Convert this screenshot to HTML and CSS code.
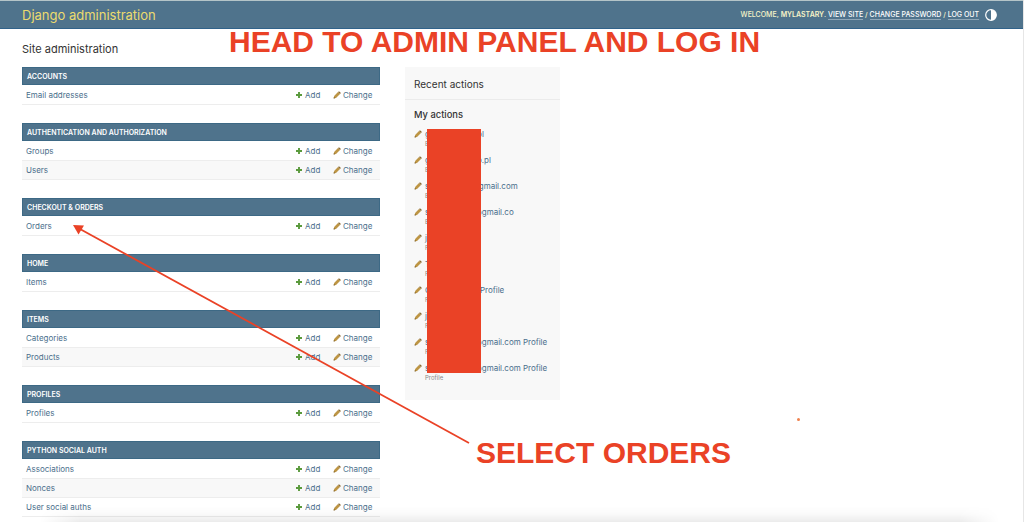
FILE: index.html
```html
<!DOCTYPE html>
<html lang="en">
<head>
<meta charset="utf-8">
<meta name="viewport" content="width=device-width, initial-scale=1">
<title>Site administration | Django site admin</title>
<link rel="stylesheet" href="styles.css">
</head>
<body>
<svg class="defs" aria-hidden="true">
  <symbol id="add" viewBox="0 0 8 8"><path d="M4 1v6M1 4h6" stroke="#5a9a3c" stroke-width="1.9" fill="none"/></symbol>
  <symbol id="pencil" viewBox="0 0 8 8"><path d="M.8 7.3 1.1 5 5 1.1 7 3 3 6.9Z" fill="#bd9544"/><path d="M5 1.1 5.700.5Q6.400.3 7.100.9T7.600 2.400L7 3Z" fill="#8b6b32"/><path d="M.6 7.5 .9 5.900 2.200 7.200Z" fill="#70531f"/></symbol>
</svg>
<div class="page">
  <header class="header">
    <a class="brand" href="#">Django administration</a>
    <div class="user-tools">
      <span>WELCOME, <strong>MYLASTARY</strong>. <a href="#">VIEW SITE</a> / <a href="#">CHANGE PASSWORD</a> / <button class="logout" type="button">LOG OUT</button></span>
      <button class="theme" type="button" aria-label="Toggle theme"><svg viewBox="0 0 12 12"><circle cx="6" cy="6" r="5.3" fill="none" stroke="#fff" stroke-width="1.2"/><path d="M6 .7a5.3 5.3 0 0 1 0 10.6Z" fill="#fff"/></svg></button>
    </div>
  </header>
  <main class="content">
    <h1>Site administration</h1>
    <div class="columns">
      <div class="apps">
        <table class="module"><caption>ACCOUNTS</caption><tbody>
          <tr><th scope="row"><a href="#">Email addresses</a></th><td class="add"><a href="#"><svg><use href="#add"/></svg>Add</a></td><td class="change"><a href="#"><svg><use href="#pencil"/></svg>Change</a></td></tr>
        </tbody></table>
        <table class="module"><caption>AUTHENTICATION AND AUTHORIZATION</caption><tbody>
          <tr><th scope="row"><a href="#">Groups</a></th><td class="add"><a href="#"><svg><use href="#add"/></svg>Add</a></td><td class="change"><a href="#"><svg><use href="#pencil"/></svg>Change</a></td></tr>
          <tr><th scope="row"><a href="#">Users</a></th><td class="add"><a href="#"><svg><use href="#add"/></svg>Add</a></td><td class="change"><a href="#"><svg><use href="#pencil"/></svg>Change</a></td></tr>
        </tbody></table>
        <table class="module"><caption>CHECKOUT &amp; ORDERS</caption><tbody>
          <tr><th scope="row"><a href="#">Orders</a></th><td class="add"><a href="#"><svg><use href="#add"/></svg>Add</a></td><td class="change"><a href="#"><svg><use href="#pencil"/></svg>Change</a></td></tr>
        </tbody></table>
        <table class="module"><caption>HOME</caption><tbody>
          <tr><th scope="row"><a href="#">Items</a></th><td class="add"><a href="#"><svg><use href="#add"/></svg>Add</a></td><td class="change"><a href="#"><svg><use href="#pencil"/></svg>Change</a></td></tr>
        </tbody></table>
        <table class="module"><caption>ITEMS</caption><tbody>
          <tr><th scope="row"><a href="#">Categories</a></th><td class="add"><a href="#"><svg><use href="#add"/></svg>Add</a></td><td class="change"><a href="#"><svg><use href="#pencil"/></svg>Change</a></td></tr>
          <tr><th scope="row"><a href="#">Products</a></th><td class="add"><a href="#"><svg><use href="#add"/></svg>Add</a></td><td class="change"><a href="#"><svg><use href="#pencil"/></svg>Change</a></td></tr>
        </tbody></table>
        <table class="module"><caption>PROFILES</caption><tbody>
          <tr><th scope="row"><a href="#">Profiles</a></th><td class="add"><a href="#"><svg><use href="#add"/></svg>Add</a></td><td class="change"><a href="#"><svg><use href="#pencil"/></svg>Change</a></td></tr>
        </tbody></table>
        <table class="module"><caption>PYTHON SOCIAL AUTH</caption><tbody>
          <tr><th scope="row"><a href="#">Associations</a></th><td class="add"><a href="#"><svg><use href="#add"/></svg>Add</a></td><td class="change"><a href="#"><svg><use href="#pencil"/></svg>Change</a></td></tr>
          <tr><th scope="row"><a href="#">Nonces</a></th><td class="add"><a href="#"><svg><use href="#add"/></svg>Add</a></td><td class="change"><a href="#"><svg><use href="#pencil"/></svg>Change</a></td></tr>
          <tr><th scope="row"><a href="#">User social auths</a></th><td class="add"><a href="#"><svg><use href="#add"/></svg>Add</a></td><td class="change"><a href="#"><svg><use href="#pencil"/></svg>Change</a></td></tr>
        </tbody></table>
      </div>
      <aside class="recent">
        <h2>Recent actions</h2>
        <h3>My actions</h3>
        <ul>
          <li><svg><use href="#pencil"/></svg><a href="#"><span class="lead">g</span>pl</a><small>E</small></li>
          <li><svg><use href="#pencil"/></svg><a href="#"><span class="lead">g</span>o.pl</a><small>E</small></li>
          <li><svg><use href="#pencil"/></svg><a href="#"><span class="lead short">s</span>@gmail.com</a><small>E</small></li>
          <li><svg><use href="#pencil"/></svg><a href="#"><span class="lead medium">s</span>@gmail.co</a><small>E</small></li>
          <li><svg><use href="#pencil"/></svg><a href="#">j</a><small>P</small></li>
          <li><svg><use href="#pencil"/></svg><a href="#">T</a><small>P</small></li>
          <li><svg><use href="#pencil"/></svg><a href="#"><span class="lead long">G</span>Profile</a><small>P</small></li>
          <li><svg><use href="#pencil"/></svg><a href="#">j</a><small>P</small></li>
          <li><svg><use href="#pencil"/></svg><a href="#"><span class="lead medium">s</span>@gmail.com Profile</a><small>P</small></li>
          <li><svg><use href="#pencil"/></svg><a href="#"><span class="lead medium">s</span>@gmail.com Profile</a><small>Profile</small></li>
        </ul>
      </aside>
    </div>
  </main>
  <div class="dock-shadow"></div>
  <div class="redaction"></div>
  <svg class="arrow" width="398" height="220" viewBox="0 0 398 220" aria-hidden="true"><path d="M7 4 396 218" stroke="#ea4226" stroke-width="1.8"/><path d="M0 0 11 .5 5.500 9.500Z" fill="#ea4226"/></svg>
  <p class="note note-login">HEAD TO ADMIN PANEL AND LOG IN</p>
  <p class="note note-orders">SELECT ORDERS</p>
  <span class="dot"></span>
</div>
</body>
</html>
```
FILE: styles.css
```css
* { box-sizing: border-box; }
body {
  margin: 0;
  background: #fff;
  color: #333;
  font: 8px/12px Inter, "Liberation Sans", sans-serif;
}
a { color: #4b6f8c; text-decoration: none; }
button { padding: 0; border: 0; background: none; color: inherit; font: inherit; }
h1, h2, h3, p, ul { margin: 0; padding: 0; font-weight: 400; }
.defs { position: absolute; width: 0; height: 0; }
.page {
  position: relative;
  min-height: 100vh;
  border-right: 1px solid #e6e6e6;
  overflow: hidden;
}
.header {
  display: flex;
  align-items: center;
  justify-content: space-between;
  height: 29px;
  padding: 0 26px 0 22px;
  border-top: 1px solid #b4c4c8;
  border-bottom: 1px solid #30628a;
  background: #4f738c;
  color: #f7f3c8;
}
.brand { color: #ecdb6e; font-size: 13px; line-height: 20px; }
.user-tools { display: flex; align-items: center; gap: 6px; padding-top: 1px; font-size: 7px; font-weight: 500; }
.user-tools strong { font-weight: 600; }
.user-tools a, .logout { color: #fff; border-bottom: 1px solid #8fa6b7; }
.logout { line-height: 9px; }
.theme { width: 12px; height: 12px; }
.theme svg { display: block; width: 12px; height: 12px; }
.content { padding: 10px 22px 0; }
h1 { margin-bottom: 8px; font-size: 11px; line-height: 20px; }
.columns { display: flex; align-items: flex-start; gap: 25px; max-width: 538px; }
.apps { flex: 1; }
.module {
  width: 100%;
  margin-bottom: 18px;
  border-collapse: separate;
  border-spacing: 0;
  table-layout: fixed;
}
.module:last-child { margin-bottom: 0; }
.module caption {
  height: 18px;
  padding: 3px 4px 1px;
  border: 1px solid #3d6985;
  background: #4f738c;
  color: #fff;
  font-size: 7px;
  font-weight: 600;
  text-align: left;
}
.module th, .module td {
  height: 19px;
  padding: 0;
  border-bottom: 1px solid #ededed;
  font-weight: 400;
  text-align: left;
}
.module tr:first-child > * { height: 20px; }
.module th { padding-left: 4px; }
.module .add { width: 38px; }
.module .change { width: 47px; }
.module tr:nth-child(even) { background: #f8f8f8; }
.module td a { display: flex; align-items: center; gap: 2px; }
.module svg, .recent svg { flex: none; width: 8px; height: 8px; }
.recent { width: 155px; padding-bottom: 12px; background: #f8f8f8; }
.recent h2 {
  padding: 7px 9px 5px;
  border-bottom: 1px solid #ebebeb;
  font-size: 10px;
  line-height: 20px;
}
.recent h3 { padding: 9px 9px 7px; font-weight: 500; }
.recent ul { padding: 0 9px; list-style: none; }
.recent li {
  display: grid;
  grid-template-columns: 8px 1fr;
  column-gap: 3px;
  height: 26px;
  align-content: start;
  align-items: center;
  white-space: nowrap;
}
.recent small { grid-column: 2; color: #888; font-size: 6px; line-height: 8px; }
.lead { display: inline-block; width: 52px; }
.lead.short { width: 46px; }
.lead.medium { width: 49px; }
.lead.long { width: 55px; }
.dock-shadow {
  position: absolute;
  right: 24px;
  bottom: 0;
  left: 40px;
  height: 16px;
  background: linear-gradient(transparent, rgba(0, 0, 0, .02) 50%, rgba(0, 0, 0, .08));
  mask-image: linear-gradient(90deg, transparent, #000 40px, #000 calc(100% - 40px), transparent);
}
.redaction {
  position: absolute;
  top: 129px;
  left: 427px;
  width: 54px;
  height: 244px;
  background: #ea4226;
}
.arrow { position: absolute; top: 225px; left: 73px; }
.note {
  position: absolute;
  color: #ea4226;
  font: 700 30px/36px "Liberation Sans", sans-serif;
  white-space: nowrap;
}
.note-login { top: 24px; left: 229px; }
.note-orders { top: 435px; left: 476px; }
.dot {
  position: absolute;
  top: 418px;
  left: 797px;
  width: 3px;
  height: 3px;
  border-radius: 50%;
  background: #f0824e;
}
```
